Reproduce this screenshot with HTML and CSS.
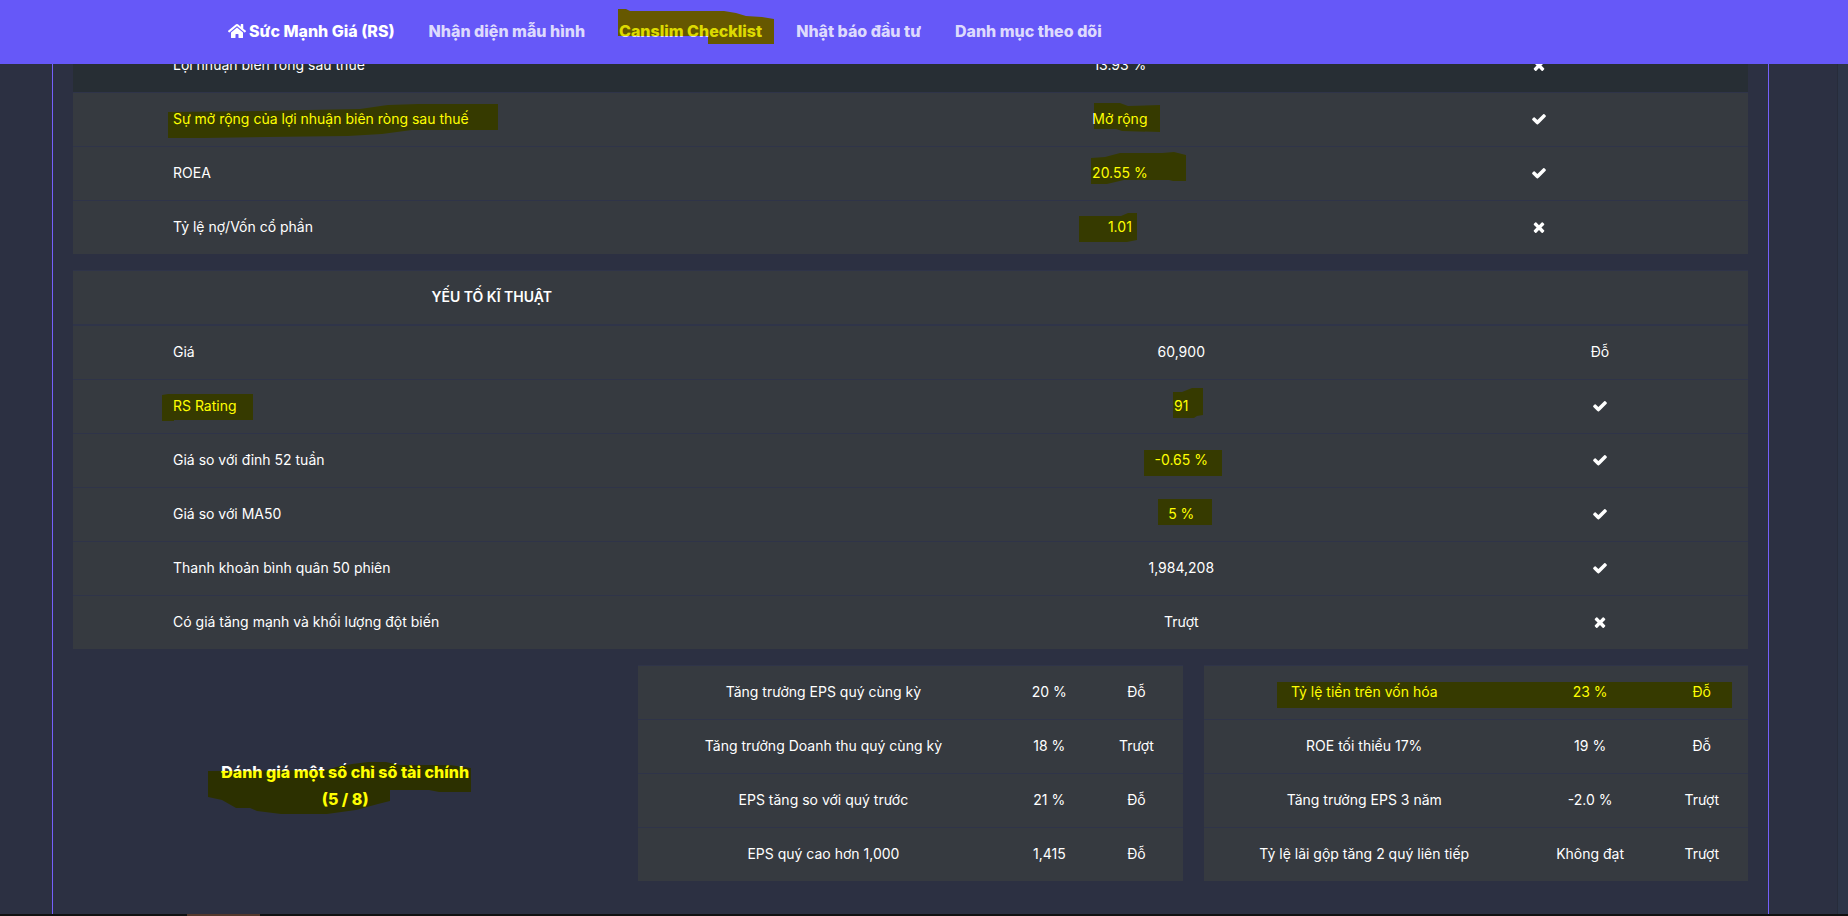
FILE: index.html
```html
<!DOCTYPE html>
<html lang="vi">
<head>
    <meta charset="UTF-8">
    <meta name="viewport" content="width=device-width, initial-scale=1.0">
    <title>Canslim Checklist</title>
    <link rel="stylesheet" href="styles.css">
</head>
<body>
    <!-- Icon shapes -->
    <svg class="icon-defs" aria-hidden="true">
        <symbol id="icon-home" viewBox="0 0 576 512">
            <path d="M280.37 148.26L96 300.11V464a16 16 0 0 0 16 16l112.06-.29a16 16 0 0 0 15.92-16V368a16 16 0 0 1 16-16h64a16 16 0 0 1 16 16v95.64a16 16 0 0 0 16 16.05L464 480a16 16 0 0 0 16-16V300L295.67 148.26a12.19 12.19 0 0 0-15.3 0zM571.6 251.47L488 182.56V44.05a12 12 0 0 0-12-12h-56a12 12 0 0 0-12 12v72.61L318.47 43a48 48 0 0 0-61 0L4.34 251.47a12 12 0 0 0-1.6 16.9l25.5 31A12 12 0 0 0 45.15 301l235.22-193.74a12.19 12.19 0 0 1 15.3 0L530.9 301a12 12 0 0 0 16.9-1.6l25.5-31a12 12 0 0 0-1.7-16.93z"/>
        </symbol>
        <symbol id="icon-check" viewBox="0 0 1792 1792">
            <path d="M1671 566q0 40-28 68l-724 724-136 136q-28 28-68 28t-68-28l-136-136-362-362q-28-28-28-68t28-68l136-136q28-28 68-28t68 28l294 295 656-657q28-28 68-28t68 28l136 136q28 28 28 68z"/>
        </symbol>
        <symbol id="icon-times" viewBox="0 0 1792 1792">
            <path d="M1490 1322q0 40-28 68l-136 136q-28 28-68 28t-68-28l-294-294-294 294q-28 28-68 28t-68-28l-136-136q-28-28-28-68t28-68l294-294-294-294q-28-28-28-68t28-68l136-136q28-28 68-28t68 28l294 294 294-294q28-28 68-28t68 28l136 136q28 28 28 68t-28 68l-294 294 294 294q28 28 28 68z"/>
        </symbol>
    </svg>

    <header class="navbar">
        <nav class="nav">
            <a class="nav-link active" href="#"><svg class="icon-home"><use href="#icon-home"/></svg>Sức Mạnh Giá (RS)</a>
            <a class="nav-link" href="#">Nhận diện mẫu hình</a>
            <a class="nav-link" href="#">Canslim Checklist</a>
            <a class="nav-link" href="#">Nhật báo đầu tư</a>
            <a class="nav-link" href="#">Danh mục theo dõi</a>
        </nav>
    </header>

    <main class="content">
        <table class="table table-basic">
            <colgroup><col class="col-name"><col class="col-value"><col class="col-result"></colgroup>
            <tbody>
                <tr class="hovered"><td>Lợi nhuận biên ròng sau thuế</td><td>13.93 %</td><td><svg class="icon"><use href="#icon-times"/></svg></td></tr>
                <tr><td>Sự mở rộng của lợi nhuận biên ròng sau thuế</td><td>Mở rộng</td><td><svg class="icon"><use href="#icon-check"/></svg></td></tr>
                <tr><td>ROEA</td><td>20.55 %</td><td><svg class="icon"><use href="#icon-check"/></svg></td></tr>
                <tr><td>Tỷ lệ nợ/Vốn cổ phần</td><td>1.01</td><td><svg class="icon"><use href="#icon-times"/></svg></td></tr>
            </tbody>
        </table>

        <table class="table table-technical">
            <colgroup><col class="col-name"><col class="col-value"><col class="col-result"></colgroup>
            <thead>
                <tr><th>YẾU TỐ KĨ THUẬT</th><th></th><th></th></tr>
            </thead>
            <tbody>
                <tr><td>Giá</td><td>60,900</td><td>Đỗ</td></tr>
                <tr><td>RS Rating</td><td>91</td><td><svg class="icon"><use href="#icon-check"/></svg></td></tr>
                <tr><td>Giá so với đỉnh 52 tuần</td><td>-0.65 %</td><td><svg class="icon"><use href="#icon-check"/></svg></td></tr>
                <tr><td>Giá so với MA50</td><td>5 %</td><td><svg class="icon"><use href="#icon-check"/></svg></td></tr>
                <tr><td>Thanh khoản bình quân 50 phiên</td><td>1,984,208</td><td><svg class="icon"><use href="#icon-check"/></svg></td></tr>
                <tr><td>Có giá tăng mạnh và khối lượng đột biến</td><td>Trượt</td><td><svg class="icon"><use href="#icon-times"/></svg></td></tr>
            </tbody>
        </table>

        <section class="summary">
            <h2 class="summary-title">Đánh giá một số chỉ số tài chính<br>(5 / 8)</h2>

            <table class="table table-growth">
                <colgroup><col class="col-name"><col class="col-value"><col class="col-result"></colgroup>
                <tbody>
                    <tr><td>Tăng trưởng EPS quý cùng kỳ</td><td>20 %</td><td>Đỗ</td></tr>
                    <tr><td>Tăng trưởng Doanh thu quý cùng kỳ</td><td>18 %</td><td>Trượt</td></tr>
                    <tr><td>EPS tăng so với quý trước</td><td>21 %</td><td>Đỗ</td></tr>
                    <tr><td>EPS quý cao hơn 1,000</td><td>1,415</td><td>Đỗ</td></tr>
                </tbody>
            </table>

            <table class="table table-ratio">
                <colgroup><col class="col-name"><col class="col-value"><col class="col-result"></colgroup>
                <tbody>
                    <tr><td>Tỷ lệ tiền trên vốn hóa</td><td>23 %</td><td>Đỗ</td></tr>
                    <tr><td>ROE tối thiểu 17%</td><td>19 %</td><td>Đỗ</td></tr>
                    <tr><td>Tăng trưởng EPS 3 năm</td><td>-2.0 %</td><td>Trượt</td></tr>
                    <tr><td>Tỷ lệ lãi gộp tăng 2 quý liên tiếp</td><td>Không đạt</td><td>Trượt</td></tr>
                </tbody>
            </table>
        </section>
    </main>

    <div class="scroll-track"></div>
    <div class="taskbar"><span class="taskbar-item"></span></div>

    <!-- Highlighter strokes drawn over the page -->
    <svg class="marker" aria-hidden="true">
        <path d="M618 9h8l4 2h94l12 2 10 3 16 1 12 2v25h-66v-8h-90z"/>
        <path d="M168 112l92-1 47-1 53-1 28-4 30-1h80v26h-86l-30 4-34 2-80 1-63 1h-37z"/>
        <path d="M1094 103h26l8 3 32-1v27l-38-1-6-2h-22z"/>
        <path d="M1091 158l14-1 15-4h42l12-1 12 3v26h-13l-4-1h-45l-17 4h-16z"/>
        <path d="M1079 216h42l7-3h9v27l-10 2h-48z"/>
        <path d="M162 395l6-1h85v26h-79v1h-12z"/>
        <path d="M1173 392h9l10-4h11v27l-6 1-3 2h-21z"/>
        <path d="M1144 450h78v26h-78z"/>
        <path d="M1158 499h54v26h-54z"/>
        <path d="M208 771l118-1 10-3 16-3 16-2h18l14 3h50l21 3v24h-32l-10-2h-39v11l-12 3-22 6-29 4h-46l-24-3-7-3h-14l-14-8-14-3z"/>
        <path d="M1277 682h455v26h-455z"/>
    </svg>
</body>
</html>
```

FILE: styles.css
```css
* {
    box-sizing: border-box;
}
body {
    margin: 0;
    min-height: 100vh;
    background-color: #2c3042;
    color: #fff;
    font-family: Inter, "Noto Sans", sans-serif;
    font-size: 14px;
    line-height: 21px;
}
.icon-defs {
    position: absolute;
    width: 0;
    height: 0;
}

/* Navbar */
.navbar {
    position: fixed;
    top: 0;
    left: 0;
    right: 0;
    z-index: 10;
    height: 64px;
    padding: 0 228px 2px;
    background-color: #6658f8;
}
.nav {
    display: flex;
    align-items: center;
    gap: 34px;
    height: 100%;
}
.nav-link {
    display: flex;
    align-items: center;
    gap: 3px;
    color: rgba(255, 255, 255, 0.8);
    font-size: 16px;
    font-weight: 800;
    text-decoration: none;
    white-space: nowrap;
}
.nav-link.active {
    color: #fff;
}
.icon-home {
    width: 18px;
    height: 16px;
    fill: currentColor;
}

/* Content */
.content {
    display: flex;
    flex-direction: column;
    gap: 16px;
    min-height: 100vh;
    margin: 0 79px 0 52px;
    padding: 38px 20px 32px;
    border-left: 1px solid #7560fb;
    border-right: 1px solid #7560fb;
}
.table {
    width: 100%;
    table-layout: fixed;
    border-spacing: 0;
    background-color: #363a40;
}
.table td,
.table th {
    height: 54px;
    padding: 0 0 2px;
    border-top: 1px solid #2f3449;
    text-align: center;
    white-space: nowrap;
}
.table th {
    height: 55px;
    border-bottom: 1px solid #2f3449;
    font-weight: 600;
}
.table .hovered {
    background-color: #272e34;
}
.table-basic td:first-child,
.table-technical td:first-child {
    padding-left: 100px;
    text-align: left;
}
.table-basic .col-name,
.table-technical .col-name {
    width: 50%;
}
.table-basic .col-result {
    width: 25%;
}
.table-technical .col-result {
    width: 296px;
}
.icon {
    display: block;
    width: 16px;
    height: 16px;
    margin: 0 auto;
    fill: #fff;
}

/* Summary */
.summary {
    display: grid;
    grid-template-columns: repeat(3, 1fr);
    gap: 21px;
    align-items: center;
}
.summary-title {
    margin: 0;
    padding-top: 26px;
    font-size: 16px;
    font-weight: 800;
    line-height: 27px;
    text-align: center;
}
.table-growth .col-name {
    width: 68%;
}
.table-ratio .col-name {
    width: 59%;
}
.table-growth .col-result,
.table-ratio .col-result {
    width: 17%;
}

/* Window edges */
.scroll-track {
    position: fixed;
    top: 64px;
    right: 0;
    bottom: 0;
    width: 11px;
    background-color: #2d3548;
    border-left: 1px solid #272c3a;
}
.taskbar {
    position: fixed;
    left: 0;
    right: 0;
    bottom: 0;
    height: 2px;
    padding-left: 187px;
    background-color: #111;
}
.taskbar-item {
    display: block;
    width: 73px;
    height: 2px;
    background-color: #53382c;
}
.marker {
    position: absolute;
    top: 0;
    left: 0;
    z-index: 20;
    width: 100%;
    height: 100%;
    fill: #ff0;
    mix-blend-mode: multiply;
    pointer-events: none;
}
```
